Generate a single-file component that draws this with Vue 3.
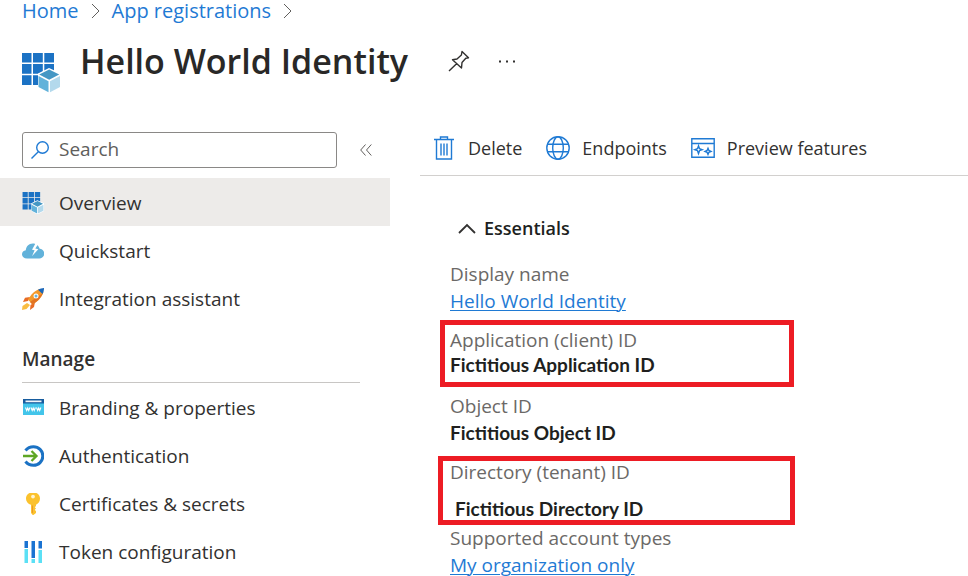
<script setup>
import { ref } from 'vue'

const query = ref('')
const expanded = ref(true)

const topItems = [
  { id: 'overview', label: 'Overview', active: true },
  { id: 'quickstart', label: 'Quickstart' },
  { id: 'rocket', label: 'Integration assistant' },
]
const manageItems = [
  { id: 'branding', label: 'Branding & properties' },
  { id: 'auth', label: 'Authentication' },
  { id: 'key', label: 'Certificates & secrets' },
  { id: 'token', label: 'Token configuration' },
]
const fields = [
  { label: 'Display name', value: 'Hello World Identity', link: true },
  { label: 'Application (client) ID', value: 'Fictitious Application ID', mark: 'mark-app' },
  { label: 'Object ID', value: 'Fictitious Object ID' },
  { label: 'Directory (tenant) ID', value: 'Fictitious Directory ID', mark: 'mark-dir' },
  { label: 'Supported account types', value: 'My organization only', link: true },
]
</script>

<template>
  <div class="page">
    <svg class="defs" aria-hidden="true">
      <symbol id="i-overview" viewBox="0 0 38 40">
        <path fill="#1b72c4" d="M0 0h9.500v9.500H0zM11 0h9.800v9.500H11zM22.300 0H32v9.500h-9.700zM0 11h9.500v9.800H0zM11 11h9.800v9.800H11zM22.300 11H32v9.800h-9.700zM0 22.300h9.500V32H0zM11 22.300h9.800V32H11z" />
        <path class="halo" d="M27 15l12 5.500v14L27 41l-11-6.500v-14z" />
        <path fill="#4597c4" d="M27.200 16.500l10 5-10 5.300-10-5.300z" />
        <path fill="#62b2da" d="M16.500 23l10 5.200v11l-10-5.200z" />
        <path fill="#b3d9ec" d="M38 23l-10 5.200v11l10-5.200z" />
      </symbol>
      <symbol id="i-quickstart" viewBox="0 0 22 22">
        <path fill="#62b2da" d="M5 18.500C2 18.500 0 16.800 0 14.300c0-2.200 1.600-3.900 3.800-4.100C4 6.800 6.700 3.500 10.800 3.500c3.500 0 6 2.200 6.900 5.300 2.600.3 4.600 2.200 4.600 4.800 0 2.800-2.200 4.900-5 4.900z" />
        <path fill="#fff" d="M14 2.500l-4 7.300 2.600.5-2.600 5.900 6.300-7-3-.6 3.400-5.400z" />
      </symbol>
      <symbol id="i-rocket" viewBox="0 0 22 22">
        <path fill="#e86c25" d="M8 9L3 9.700 1 14l5-1zM13 14l-1 5-4 3 .5-5z" />
        <path fill="#f9bd42" d="M5 15l-4.500 3L0 22l4.500-1L8 17z" />
        <path fill="#f39a2c" d="M6 11.500C9 6.500 13 2.300 18 1l3.500 3C20 9.500 15.500 13.500 10.500 16.500z" />
        <path fill="#e27422" d="M21 5c-2 5-6 9-10.500 11.500L8 14z" />
        <path fill="#1b66b8" d="M16 1.700C18 .6 20 .1 22 0c.1 2-.4 4.200-1.500 6z" />
        <circle cx="14" cy="8" r="2.500" fill="#fff" /><circle cx="14" cy="8" r="1.500" fill="#66b4dc" />
      </symbol>
      <symbol id="i-branding" viewBox="0 0 22 22">
        <path fill="#43c5ea" d="M1 6h21v12H1z" />
        <path fill="#175c9e" d="M1 2h21v4.500H1z" />
        <path fill="#f3f6fb" d="M3.500 3.500h16v1.700h-16z" />
        <path fill="none" stroke="#fff" stroke-width="1.100" d="M3.500 10.500l1.200 3 1-2.500 1 2.500 1.200-3M9 10.500l1.200 3 1-2.500 1 2.500 1.200-3M14.500 10.500l1.200 3 1-2.500 1 2.500 1.200-3" />
      </symbol>
      <symbol id="i-auth" viewBox="0 0 22 22">
        <path fill="none" stroke="#1b72c4" stroke-width="3" d="M3.500 5.500C5.500 3 8.200 1.700 11.500 1.700a9.300 9.300 0 0 1 0 18.600c-3.300 0-6-1.300-8-3.800" />
        <path fill="none" stroke="#5ea625" stroke-width="2.300" d="M1 11h13M9.500 6l5 5-5 5" />
      </symbol>
      <symbol id="i-key" viewBox="0 0 22 22">
        <path fill="#fbc22e" d="M8.500 0h5C16 0 18 2.500 18 5.500c0 3-2 5.500-4 6.200V13l-1.200 1.300L14 15.500l-1.200 1.300L14 18.200V20l-3 2.300L9 20v-8.200C6 11 4 8.500 4 5.700 4 2.700 6 0 8.500 0z" />
        <path fill="#e9952a" d="M10 12.500h1v7.800l-1-.8z" />
        <circle cx="11" cy="3.600" r="1.900" fill="#fff4d5" />
      </symbol>
      <symbol id="i-token" viewBox="0 0 22 22">
        <path fill="#5be0f5" d="M2.500 8H6v14H2.500zM9.500 18H13v4H9.500zM16.500 9H20v13h-3.500z" />
        <path fill="#1a73d2" d="M2.500 0H6v7H2.500zM9.500 0H13v17H9.500zM16.500 0H20v7.500h-3.500z" />
      </symbol>
    </svg>

    <header>
      <nav class="crumbs" aria-label="Breadcrumb">
        <a href="#home">Home</a>
        <svg class="sep" viewBox="0 0 9 16"><path d="M1 1l7 7-7 7" /></svg>
        <a href="#apps">App registrations</a>
        <svg class="sep" viewBox="0 0 9 16"><path d="M1 1l7 7-7 7" /></svg>
      </nav>
      <div class="heading">
        <svg class="app-icon"><use href="#i-overview" /></svg>
        <h1>Hello World Identity</h1>
        <button class="plain pin" aria-label="Pin">
          <svg viewBox="0 0 22 22"><path fill="none" stroke="#323130" stroke-width="1.400" stroke-linejoin="round" d="M14 1.500l6.500 6.300-2.700.5-3.800 4.200-.5 5.500L4.500 9.800 9 9l4.400-4zM8.800 13.500L1 21" /></svg>
        </button>
        <button class="plain more" aria-label="More">
          <svg viewBox="0 0 17 3"><path fill="#323130" d="M0 .5h2v2H0zM7 .5h2v2H7zM14 .5h2v2h-2z" /></svg>
        </button>
      </div>
    </header>

    <div class="columns">
      <aside>
        <div class="search-row">
          <label class="search">
            <svg viewBox="0 0 18 18"><circle cx="11.500" cy="6.500" r="5.800" /><path d="M7.300 10.700L.5 17.500" /></svg>
            <input v-model="query" type="text" placeholder="Search" aria-label="Search" />
          </label>
          <button class="plain" aria-label="Collapse menu">
            <svg class="collapse" viewBox="0 0 12 12"><path d="M5.500.5L.7 6l4.800 5.500M11.300.5L6.500 6l4.800 5.500" /></svg>
          </button>
        </div>
        <nav aria-label="Menu">
          <a v-for="i in topItems" :key="i.id" :href="'#' + i.id" class="item top" :class="{ active: i.active }">
            <svg><use :href="'#i-' + i.id" /></svg>{{ i.label }}
          </a>
          <h2>Manage</h2>
          <a v-for="i in manageItems" :key="i.id" :href="'#' + i.id" class="item">
            <svg><use :href="'#i-' + i.id" /></svg>{{ i.label }}
          </a>
        </nav>
      </aside>

      <main>
        <div class="toolbar">
          <button class="plain tool">
            <svg viewBox="0 0 24 24"><path d="M2 3.500h20M8.500 3V1h7v2M4.500 4v19h15V4M9 7.500v12M12 7.500v12M15 7.500v12" /></svg>Delete
          </button>
          <button class="plain tool">
            <svg viewBox="0 0 24 24"><circle cx="12" cy="12" r="11.200" /><ellipse cx="12" cy="12" rx="5.300" ry="11.200" /><path d="M2 8.300h20M2 15.700h20" /></svg>Endpoints
          </button>
          <button class="plain tool">
            <svg viewBox="0 0 24 24"><path d="M.8 2.800h22.400v18.400H.8zM1 7.500h22M7.500 9.800l1 2.900 2.700 1-2.700 1-1 2.900-1-2.900-2.700-1 2.700-1zM17 12.300l.9 2.200 2.100.9-2.100.9-.9 2.200-.9-2.200-2.100-.9 2.100-.9z" /></svg>Preview features
          </button>
        </div>
        <section>
          <button class="plain essentials" :aria-expanded="expanded" @click="expanded = !expanded">
            <svg viewBox="0 0 18 11"><path d="M1 10l8-8 8 8" /></svg>Essentials
          </button>
          <dl v-if="expanded">
            <div v-for="f in fields" :key="f.label" class="field" :class="f.mark">
              <dt>{{ f.label }}</dt>
              <dd><a v-if="f.link" href="#details">{{ f.value }}</a><strong v-else>{{ f.value }}</strong></dd>
            </div>
          </dl>
        </section>
      </main>
    </div>
  </div>
</template>

<style>
body { background: #fff; }
</style>

<style scoped>
.page {
  font: 19px/24px "Open Sans", "Noto Sans", sans-serif;
  color: #323130;
}
.page * { box-sizing: border-box; }
.defs { display: none; }
a { color: #1f7ad4; text-decoration: none; }
h1, h2, dl, dd { margin: 0; }
svg { flex: none; }
.plain {
  display: flex;
  align-items: center;
  padding: 0;
  border: 0;
  background: none;
  font: inherit;
  color: inherit;
  cursor: pointer;
}
.crumbs {
  display: flex;
  align-items: center;
  gap: 12px;
  height: 22px;
  padding-left: 22px;
  font-size: 20px;
  line-height: 22px;
}
.sep { width: 9px; height: 16px; fill: none; stroke: #605e5c; }
.heading { display: flex; align-items: center; height: 78px; padding-left: 22px; }
.app-icon { width: 38px; height: 40px; margin: 24px 20px 0 0; }
.halo { fill: #fff; }
h1 { font-size: 34px; line-height: 48px; font-weight: 600; color: #292827; }
.pin { margin-left: 40px; }
.pin svg { width: 22px; height: 22px; }
.more { margin-left: 29px; }
.more svg { width: 17px; height: 3px; }
.columns { display: flex; align-items: flex-start; padding-top: 24px; }
aside { flex: none; width: 390px; }
.search-row {
  display: flex;
  align-items: center;
  gap: 23px;
  height: 54px;
  padding: 8px 17px 10px 22px;
}
.search {
  display: flex;
  align-items: center;
  flex: 1;
  gap: 10px;
  height: 36px;
  padding: 0 8px;
  border: 1px solid #8a8886;
  border-radius: 3px;
}
.search svg { width: 18px; height: 18px; fill: none; stroke: #1f7ad4; stroke-width: 1.400; }
.search input {
  flex: 1;
  min-width: 0;
  padding: 0 0 2px;
  border: 0;
  outline: 0;
  background: none;
  font: inherit;
  color: #323130;
}
.search input::placeholder { color: #605e5c; opacity: 1; }
.collapse { width: 12px; height: 12px; margin-right: 1px; fill: none; stroke: #605e5c; }
.item {
  display: flex;
  align-items: center;
  gap: 15px;
  height: 48px;
  padding-left: 22px;
  color: #323130;
}
.item svg { width: 22px; height: 22px; }
.top { padding-top: 2px; }
.active { background: #edebe9; }
.active .halo { fill: #edebe9; }
h2 {
  height: 61px;
  margin: 0 30px 1px 22px;
  padding-top: 25px;
  border-bottom: 1px solid #c8c6c4;
  font-size: 19px;
  line-height: 24px;
  font-weight: 600;
}
main { flex: 1; min-width: 0; margin-left: 30px; }
.toolbar {
  display: flex;
  align-items: center;
  gap: 24px;
  height: 52px;
  padding: 0 12px 3px;
  border-bottom: 1px solid #d2d0ce;
  font-size: 18px;
}
.tool { gap: 12px; white-space: nowrap; }
.tool svg { width: 24px; height: 24px; fill: none; stroke: #1f7ad4; stroke-width: 1.400; }
section { padding: 40px 30px 0; }
.essentials { gap: 8px; padding-left: 8px; font-size: 18px; font-weight: 600; color: #201f1e; }
.essentials svg { width: 18px; height: 11px; fill: none; stroke: #323130; stroke-width: 1.800; }
dl { padding-top: 21px; }
.field { position: relative; height: 66px; }
dt { line-height: 26px; color: #6b6967; }
dd { line-height: 28px; }
dd a { text-decoration: underline; text-decoration-thickness: 1px; text-underline-offset: 2px; }
strong { font-family: Lato, sans-serif; font-weight: 700; color: #201f1e; }
.mark-app::after, .mark-dir::after {
  content: "";
  position: absolute;
  box-sizing: border-box;
  border: 5px solid #ed1c24;
}
.mark-app::after { inset: -7px auto auto -10px; width: 354px; height: 67px; }
.mark-dir::after { inset: -3px auto auto -12px; width: 357px; height: 69px; }
.mark-app dd { line-height: 24px; }
.mark-dir dd { padding: 10px 0 0 5px; }
</style>
